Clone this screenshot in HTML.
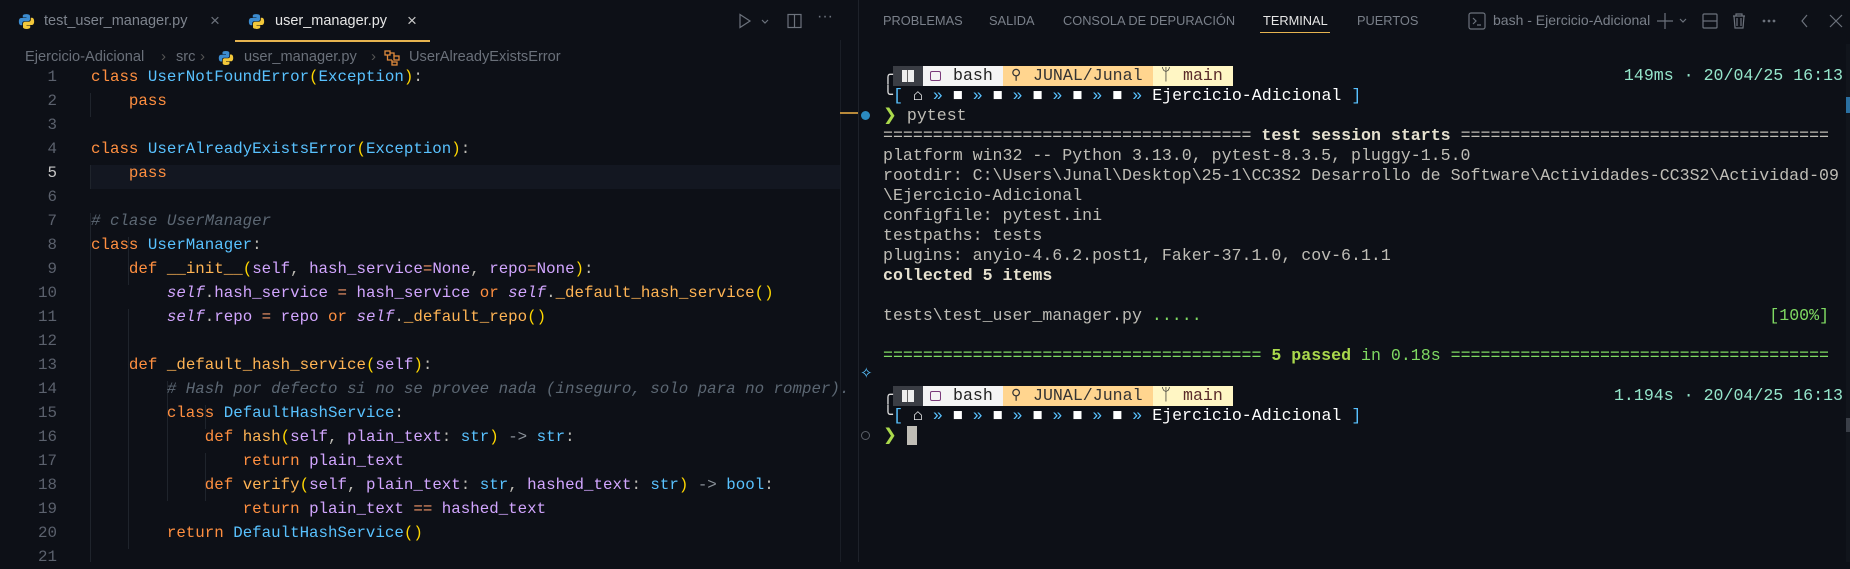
<!DOCTYPE html>
<html><head><meta charset="utf-8"><style>
*{margin:0;padding:0;box-sizing:border-box}
body{width:1850px;height:562px;background:#0d1017;overflow:hidden;position:relative;font-family:"Liberation Sans",sans-serif;color:#bfbdb6}
.a{position:absolute;white-space:pre}
.code{font-family:"Liberation Mono",monospace;font-size:15.8px;line-height:24px}
.ln{position:absolute;left:0;width:57px;text-align:right;color:#5b616d;font-family:"Liberation Mono",monospace;font-size:15.8px;line-height:24px}
.k{color:#ff8f40}.c{color:#59c2ff}.p{color:#ffd700}.s{color:#d2a6ff}.si{color:#d2a6ff;font-style:italic}.f{color:#ffb454}.o{color:#f29668}.cm{color:#5c6773;font-style:italic}.g{color:#8a9199}
.term{font-family:"Liberation Mono",monospace;font-size:16.6px;line-height:20px}
.guide{position:absolute;width:1px;background:#1f242c}
.tab{position:absolute;top:0;height:42px;font-size:14.5px;line-height:42px}
.ph{position:absolute;font-size:12.8px;top:13px;color:#7a808a}
.bb{position:absolute;height:20px;font-family:"Liberation Mono",monospace;font-size:16.6px;line-height:20px;white-space:pre}
</style></head><body>
<svg class="a" style="left:18px;top:13px" width="17" height="17" viewBox="0 0 16 16"><path d="M7.9 1C4.3 1 4.5 2.6 4.5 2.6V4.2h3.5v.5H3.1S.8 4.4.8 8s2 3.5 2 3.5h1.2V9.8s-.1-2 2-2h3.4s1.9 0 1.9-1.9V2.9S11.6 1 7.9 1z" fill="#3c8cd0"/><path d="M8.1 15c3.6 0 3.4-1.6 3.4-1.6v-1.6H8v-.5h4.9s2.3.3 2.3-3.3-2-3.5-2-3.5H12v1.7s.1 2-2 2H6.6s-1.9 0-1.9 1.9v3.1S4.4 15 8.1 15z" fill="#f3c83a"/></svg>
<div class="tab" style="left:44px;color:#7e848e">test_user_manager.py</div>
<div class="tab" style="left:210px;color:#6c727c;font-size:17px">×</div>
<div class="a" style="left:235px;top:40px;width:195px;height:2px;background:#e6b450"></div>
<svg class="a" style="left:248px;top:13px" width="17" height="17" viewBox="0 0 16 16"><path d="M7.9 1C4.3 1 4.5 2.6 4.5 2.6V4.2h3.5v.5H3.1S.8 4.4.8 8s2 3.5 2 3.5h1.2V9.8s-.1-2 2-2h3.4s1.9 0 1.9-1.9V2.9S11.6 1 7.9 1z" fill="#3c8cd0"/><path d="M8.1 15c3.6 0 3.4-1.6 3.4-1.6v-1.6H8v-.5h4.9s2.3.3 2.3-3.3-2-3.5-2-3.5H12v1.7s.1 2-2 2H6.6s-1.9 0-1.9 1.9v3.1S4.4 15 8.1 15z" fill="#f3c83a"/></svg>
<div class="tab" style="left:275px;color:#e6e6e6">user_manager.py</div>
<div class="tab" style="left:407px;color:#c8c8c8;font-size:17px">×</div>
<svg class="a" style="left:738px;top:13px" width="70" height="16" viewBox="0 0 70 16" fill="none" stroke="#6c727c" stroke-width="1.2"><path d="M2 1.5l10 6.5-10 6.5z"/><path d="M24 7l3 3 3-3"/><rect x="50" y="1.5" width="13" height="13"/><path d="M56.5 1.5v13"/></svg>
<div class="a" style="left:817px;top:8px;font-size:16px;color:#6c727c">···</div>
<div class="a" style="left:25px;top:49px;font-size:14.6px;color:#6a707a">Ejercicio-Adicional</div>
<div class="a" style="left:161px;top:48px;font-size:15px;color:#555">›</div>
<div class="a" style="left:176px;top:49px;font-size:14.6px;color:#6a707a">src</div>
<div class="a" style="left:200px;top:48px;font-size:15px;color:#555">›</div>
<svg class="a" style="left:218px;top:50px" width="16" height="16" viewBox="0 0 16 16"><path d="M7.9 1C4.3 1 4.5 2.6 4.5 2.6V4.2h3.5v.5H3.1S.8 4.4.8 8s2 3.5 2 3.5h1.2V9.8s-.1-2 2-2h3.4s1.9 0 1.9-1.9V2.9S11.6 1 7.9 1z" fill="#3c8cd0"/><path d="M8.1 15c3.6 0 3.4-1.6 3.4-1.6v-1.6H8v-.5h4.9s2.3.3 2.3-3.3-2-3.5-2-3.5H12v1.7s.1 2-2 2H6.6s-1.9 0-1.9 1.9v3.1S4.4 15 8.1 15z" fill="#f3c83a"/></svg>
<div class="a" style="left:244px;top:49px;font-size:14.6px;color:#6a707a">user_manager.py</div>
<div class="a" style="left:371px;top:48px;font-size:15px;color:#555">›</div>
<svg class="a" style="left:384px;top:50px" width="16" height="16" viewBox="0 0 16 16" fill="none" stroke="#e08a3c" stroke-width="1.3"><rect x="1" y="1" width="5" height="4"/><rect x="10" y="6" width="5" height="4"/><rect x="8" y="12" width="5" height="3"/><path d="M3.5 5v5h4.5M6 3h4v3M8 10v2"/></svg>
<div class="a" style="left:409px;top:49px;font-size:14.6px;color:#6a707a">UserAlreadyExistsError</div>
<div class="a" style="left:90px;top:165px;width:750px;height:24px;background:#131721"></div>
<div class="a" style="left:840px;top:40px;width:1px;height:522px;background:#1a1e26"></div>
<div class="a" style="left:840px;top:112px;width:18px;height:2px;background:#b8893a"></div>
<div class="a" style="left:858px;top:0;width:1px;height:562px;background:#1e222a"></div>
<div class="guide" style="left:90px;top:93px;height:24px"></div>
<div class="guide" style="left:90px;top:165px;height:24px"></div>
<div class="guide" style="left:90px;top:213px;height:349px"></div>
<div class="guide" style="left:128px;top:237px;height:48px"></div>
<div class="guide" style="left:128px;top:309px;height:240px"></div>
<div class="guide" style="left:167px;top:381px;height:120px"></div>
<div class="guide" style="left:205px;top:405px;height:24px"></div>
<div class="guide" style="left:205px;top:453px;height:48px"></div>
<div class="ln" style="top:65px">1<br>2<br>3<br>4<br><span style="color:#c8c8c8">5</span><br>6<br>7<br>8<br>9<br>10<br>11<br>12<br>13<br>14<br>15<br>16<br>17<br>18<br>19<br>20<br>21</div>
<div class="a code" style="left:91px;top:65px"><span class="k">class</span> <span class="c">UserNotFoundError</span><span class="p">(</span><span class="c">Exception</span><span class="p">)</span>:
    <span class="k">pass</span>

<span class="k">class</span> <span class="c">UserAlreadyExistsError</span><span class="p">(</span><span class="c">Exception</span><span class="p">)</span>:
    <span class="k">pass</span>

<span class="cm"># clase UserManager</span>
<span class="k">class</span> <span class="c">UserManager</span>:
    <span class="k">def</span> <span class="f">__init__</span><span class="p">(</span><span class="s">self</span>, <span class="s">hash_service</span><span class="o">=</span><span class="s">None</span>, <span class="s">repo</span><span class="o">=</span><span class="s">None</span><span class="p">)</span>:
        <span class="si">self</span>.<span class="s">hash_service</span> <span class="o">=</span> <span class="s">hash_service</span> <span class="k">or</span> <span class="si">self</span>.<span class="f">_default_hash_service</span><span class="p">()</span>
        <span class="si">self</span>.<span class="s">repo</span> <span class="o">=</span> <span class="s">repo</span> <span class="k">or</span> <span class="si">self</span>.<span class="f">_default_repo</span><span class="p">()</span>

    <span class="k">def</span> <span class="f">_default_hash_service</span><span class="p">(</span><span class="s">self</span><span class="p">)</span>:
        <span class="cm"># Hash por defecto si no se provee nada (inseguro, solo para no romper).</span>
        <span class="k">class</span> <span class="c">DefaultHashService</span>:
            <span class="k">def</span> <span class="f">hash</span><span class="p">(</span><span class="s">self</span>, <span class="s">plain_text</span>: <span class="c">str</span><span class="p">)</span> <span class="g">-&gt;</span> <span class="c">str</span>:
                <span class="k">return</span> <span class="s">plain_text</span>
            <span class="k">def</span> <span class="f">verify</span><span class="p">(</span><span class="s">self</span>, <span class="s">plain_text</span>: <span class="c">str</span>, <span class="s">hashed_text</span>: <span class="c">str</span><span class="p">)</span> <span class="g">-&gt;</span> <span class="c">bool</span>:
                <span class="k">return</span> <span class="s">plain_text</span> <span class="o">==</span> <span class="s">hashed_text</span>
        <span class="k">return</span> <span class="c">DefaultHashService</span><span class="p">()</span>
</div>
<div class="ph" style="left:883px">PROBLEMAS</div>
<div class="ph" style="left:989px">SALIDA</div>
<div class="ph" style="left:1063px">CONSOLA DE DEPURACIÓN</div>
<div class="ph" style="left:1263px;color:#e6e6e6">TERMINAL</div>
<div class="a" style="left:1260px;top:32px;width:70px;height:1px;background:#e6b450"></div>
<div class="ph" style="left:1357px">PUERTOS</div>
<svg class="a" style="left:1468px;top:12px" width="18" height="18" viewBox="0 0 18 18" fill="none" stroke="#6c727c" stroke-width="1.2"><rect x="1" y="1" width="16" height="16" rx="2"/><path d="M5 6l3 3-3 3M9 13h4"/></svg>
<div class="ph" style="left:1493px;font-size:14px;top:12px">bash - Ejercicio-Adicional</div>
<svg class="a" style="left:1656px;top:12px" width="190" height="18" viewBox="0 0 190 18" fill="none" stroke="#6c727c" stroke-width="1.2"><path d="M9 1v16M1 9h16M24 7l3 3 3-3"/><rect x="47" y="2" width="14" height="14" rx="1"/><path d="M47 9h14"/><path d="M77 4h12M80 4V2h6v2M78 4l1 12h8l1-12M81 6v8M85 6v8"/><circle cx="108" cy="9" r=".8" fill="#6c727c"/><circle cx="113" cy="9" r=".8" fill="#6c727c"/><circle cx="118" cy="9" r=".8" fill="#6c727c"/><path d="M151 3l-5 6 5 6M174 3l12 12M186 3l-12 12"/></svg>
<div class="a" style="left:1846px;top:44px;width:4px;height:518px;background:#11151c"></div>
<div class="a" style="left:1846px;top:97px;width:4px;height:16px;background:#2a6fa0"></div>
<div class="a" style="left:1846px;top:418px;width:4px;height:14px;background:#3a3f48"></div>
<div class="a" style="left:861px;top:111px;width:9px;height:9px;border-radius:50%;background:#2b8ac0"></div>
<div class="a" style="left:861px;top:431px;width:9px;height:9px;border-radius:50%;border:1.5px solid #5a5f68"></div>
<div class="a" style="left:860px;top:364px;color:#59c2ff;font-size:15px">✧</div>
<div class="bb" style="left:893px;top:66px;width:30px;background:#3a3d44"><span style="position:absolute;left:9px;top:4px;width:12px;height:12px;background:#eee;border-left:5px solid #eee;box-shadow:inset 1px 0 0 #666"></span></div>
<div class="bb" style="left:923px;top:66px;width:80px;background:#f4f4f4;color:#222"><span style="position:absolute;left:7px;top:5px;width:11px;height:10px;border:1.3px solid #7a3b7a;border-radius:2px"></span><span style="position:absolute;left:30px">bash</span></div>
<div class="bb" style="left:1003px;top:66px;width:150px;background:#ffd58f;color:#333"><span style="position:absolute;left:8px;font-size:14px">⚲</span><span style="position:absolute;left:30px">JUNAL/Junal</span></div>
<div class="bb" style="left:1153px;top:66px;width:80px;background:#fff6c4;color:#5a2a2a"><span style="position:absolute;left:8px;color:#222">ᛘ</span><span style="position:absolute;left:30px">main</span></div>
<div class="bb" style="left:893px;top:386px;width:30px;background:#3a3d44"><span style="position:absolute;left:9px;top:4px;width:12px;height:12px;background:#eee;border-left:5px solid #eee;box-shadow:inset 1px 0 0 #666"></span></div>
<div class="bb" style="left:923px;top:386px;width:80px;background:#f4f4f4;color:#222"><span style="position:absolute;left:7px;top:5px;width:11px;height:10px;border:1.3px solid #7a3b7a;border-radius:2px"></span><span style="position:absolute;left:30px">bash</span></div>
<div class="bb" style="left:1003px;top:386px;width:150px;background:#ffd58f;color:#333"><span style="position:absolute;left:8px;font-size:14px">⚲</span><span style="position:absolute;left:30px">JUNAL/Junal</span></div>
<div class="bb" style="left:1153px;top:386px;width:80px;background:#fff6c4;color:#5a2a2a"><span style="position:absolute;left:8px;color:#222">ᛘ</span><span style="position:absolute;left:30px">main</span></div>
<div class="a term" style="left:883px;top:66px"><span style="color:#ddd">╭</span>

<span style="color:#aad94c">❯</span> pytest
===================================== <b style="color:#e6e1cf">test session starts</b> =====================================
platform win32 -- Python 3.13.0, pytest-8.3.5, pluggy-1.5.0
rootdir: C:\Users\Junal\Desktop\25-1\CC3S2 Desarrollo de Software\Actividades-CC3S2\Actividad-09
\Ejercicio-Adicional
configfile: pytest.ini
testpaths: tests
plugins: anyio-4.6.2.post1, Faker-37.1.0, cov-6.1.1
<b style="color:#e6e1cf">collected 5 items</b>

tests\test_user_manager.py <span style="color:#7fd962">.....</span>                                                         <span style="color:#7fd962">[100%]</span>

<span style="color:#7fd962">====================================== <b style="color:#aad94c">5 passed</b> in 0.18s ======================================</span>

<span style="color:#ddd">╭</span>

<span style="color:#aad94c">❯</span> <span style="background:#bfbdb6"> </span></div>
<div class="a term" style="left:883px;top:86px"><span style="color:#ddd">╰</span><span style="color:#59c2ff">[</span> <span style="color:#fff">⌂</span> <span style="color:#59c2ff">»</span> <span style="color:#fff">■</span> <span style="color:#59c2ff">»</span> <span style="color:#fff">■</span> <span style="color:#59c2ff">»</span> <span style="color:#fff">■</span> <span style="color:#59c2ff">»</span> <span style="color:#fff">■</span> <span style="color:#59c2ff">»</span> <span style="color:#fff">■</span> <span style="color:#59c2ff">»</span> <span style="color:#fff">Ejercicio-Adicional</span> <span style="color:#59c2ff">]</span></div>
<div class="a term" style="left:883px;top:406px"><span style="color:#ddd">╰</span><span style="color:#59c2ff">[</span> <span style="color:#fff">⌂</span> <span style="color:#59c2ff">»</span> <span style="color:#fff">■</span> <span style="color:#59c2ff">»</span> <span style="color:#fff">■</span> <span style="color:#59c2ff">»</span> <span style="color:#fff">■</span> <span style="color:#59c2ff">»</span> <span style="color:#fff">■</span> <span style="color:#59c2ff">»</span> <span style="color:#fff">■</span> <span style="color:#59c2ff">»</span> <span style="color:#fff">Ejercicio-Adicional</span> <span style="color:#59c2ff">]</span></div>
<div class="a term" style="right:7px;top:66px;color:#95e6cb">149ms · 20/04/25 16:13</div>
<div class="a term" style="right:7px;top:386px;color:#95e6cb">1.194s · 20/04/25 16:13</div>
</body></html>
